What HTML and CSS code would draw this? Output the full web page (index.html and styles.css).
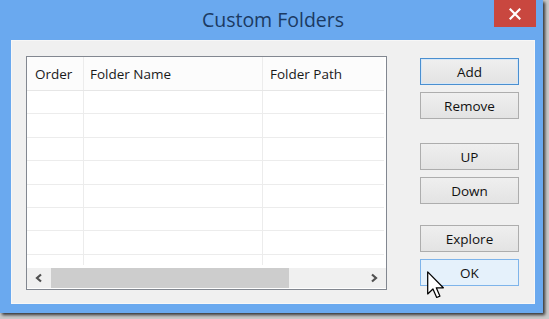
FILE: index.html
```html
<!DOCTYPE html>
<html>
<head>
<meta charset="utf-8">
<link rel="stylesheet" href="styles.css">
</head>
<body>
<div class="window">
  <div class="titlebar">
    <div class="title">Custom Folders</div>
    <div class="close">
      <svg width="12" height="12" viewBox="0 0 12 12"><path d="M1.5 1.5 L10.5 10.5 M10.5 1.5 L1.5 10.5" stroke="#fff" stroke-width="2.2" stroke-linecap="square"/></svg>
    </div>
  </div>
  <div class="client">
    <div class="list">
      <div class="grid">
        <div class="row head">
          <div class="cell c1">Order</div>
          <div class="cell c2">Folder Name</div>
          <div class="cell c3">Folder Path</div>
        </div>
        <div class="row"><div class="cell c1"></div><div class="cell c2"></div><div class="cell c3"></div></div>
        <div class="row"><div class="cell c1"></div><div class="cell c2"></div><div class="cell c3"></div></div>
        <div class="row"><div class="cell c1"></div><div class="cell c2"></div><div class="cell c3"></div></div>
        <div class="row"><div class="cell c1"></div><div class="cell c2"></div><div class="cell c3"></div></div>
        <div class="row"><div class="cell c1"></div><div class="cell c2"></div><div class="cell c3"></div></div>
        <div class="row"><div class="cell c1"></div><div class="cell c2"></div><div class="cell c3"></div></div>
        <div class="row"><div class="cell c1"></div><div class="cell c2"></div><div class="cell c3"></div></div>
        <div class="row"><div class="cell c1"></div><div class="cell c2"></div><div class="cell c3"></div></div>
      </div>
      <div class="hscroll">
        <div class="arrow">
          <svg width="10" height="10" viewBox="0 0 10 10"><path d="M7 1.5 L3 5 L7 8.5" fill="none" stroke="#505050" stroke-width="2.2"/></svg>
        </div>
        <div class="thumb"></div>
        <div class="track"></div>
        <div class="arrow">
          <svg width="10" height="10" viewBox="0 0 10 10"><path d="M3 1.5 L7 5 L3 8.5" fill="none" stroke="#505050" stroke-width="2.2"/></svg>
        </div>
      </div>
    </div>
    <div class="buttons">
      <div class="group">
        <button class="btn default">Add</button>
        <button class="btn">Remove</button>
      </div>
      <div class="group">
        <button class="btn">UP</button>
        <button class="btn">Down</button>
      </div>
      <div class="group">
        <button class="btn">Explore</button>
        <button class="btn hover">OK</button>
      </div>
    </div>
  </div>
  <svg class="cursor" width="18" height="28" viewBox="0 0 13 20">
    <path d="M0.5 0.5 L0.5 16.5 L4.3 12.9 L7 19 L9.3 18 L6.7 12 L11.8 12 Z" fill="#fff" stroke="#000" stroke-width="0.9" stroke-linejoin="round"/>
  </svg>
</div>
</body>
</html>
```
FILE: styles.css
```css
* { box-sizing: border-box; }
html, body { margin: 0; padding: 0; }
body {
  width: 549px;
  height: 319px;
  background: #c9c9c9;
  font-family: "Open Sans", "Noto Sans", sans-serif;
  overflow: hidden;
}
.window {
  position: relative;
  width: 543px;
  height: 313px;
  background: #6aa9ef;
  box-shadow: 2px 2px 3px rgba(0,0,0,0.75);
  display: flex;
  flex-direction: column;
  padding: 0 8px 9px 11px;
}
.titlebar {
  height: 40px;
  flex: none;
  position: relative;
  display: flex;
  justify-content: center;
}
.title {
  font-size: 19.5px;
  color: #1b3a62;
  padding-top: 6px;
}
.close {
  position: absolute;
  right: -1px;
  top: 0;
  width: 42px;
  height: 27px;
  background: #c9473f;
  display: flex;
  align-items: center;
  justify-content: center;
}
.client {
  flex: 1;
  min-height: 0;
  background: #f0f0f0;
  border: 1px solid #f7f7f7;
  display: flex;
  align-items: flex-start;
  padding: 15px 15px 0 14px;
}
.list {
  width: 361px;
  height: 234px;
  border: 1px solid #828790;
  background: #fff;
  display: flex;
  flex-direction: column;
}
.grid {
  height: 208px;
  overflow: hidden;
  padding-right: 2px;
}
.row {
  display: flex;
  height: 23.4px;
  border-bottom: 1px solid #ececec;
}
.row.head {
  height: 34px;
  border-bottom: 1px solid #e6e6e6;
  background: #fcfcfc;
}
.cell {
  border-right: 1px solid #ececec;
  font-size: 13.5px;
  color: #1a1a1a;
  display: flex;
  align-items: center;
}
.c1 { width: 57px; padding-left: 8px; }
.c2 { width: 179px; padding-left: 6px; }
.c3 { flex: 1; padding-left: 7px; border-right: none; }
.hscroll {
  margin-top: 3px;
  height: 20px;
  display: flex;
  background: #f0f0f0;
}
.arrow {
  width: 24px;
  display: flex;
  align-items: center;
  justify-content: center;
}
.thumb {
  width: 238px;
  background: #cdcdcd;
}
.track { flex: 1; }
.buttons {
  margin-left: 33px;
  width: 99px;
  padding-top: 2px;
  display: flex;
  flex-direction: column;
  gap: 24px;
}
.group {
  display: flex;
  flex-direction: column;
  gap: 7px;
}
.group:nth-child(3) { margin-top: -3px; }
.btn {
  height: 27px;
  width: 99px;
  border: 1px solid #adadad;
  background: linear-gradient(#efefef, #e3e3e3);
  font-family: "Open Sans", "Noto Sans", sans-serif;
  font-size: 13.5px;
  color: #111;
  padding: 0;
  margin: 0;
}
.btn.default {
  border: 1px solid #4a8fd0;
  box-shadow: inset 0 0 0 1px #d6e7f7;
}
.btn.hover {
  border: 1px solid #7eb4ea;
  background: #e5f1fb;
}
.cursor {
  position: absolute;
  left: 427px;
  top: 271px;
}
```
